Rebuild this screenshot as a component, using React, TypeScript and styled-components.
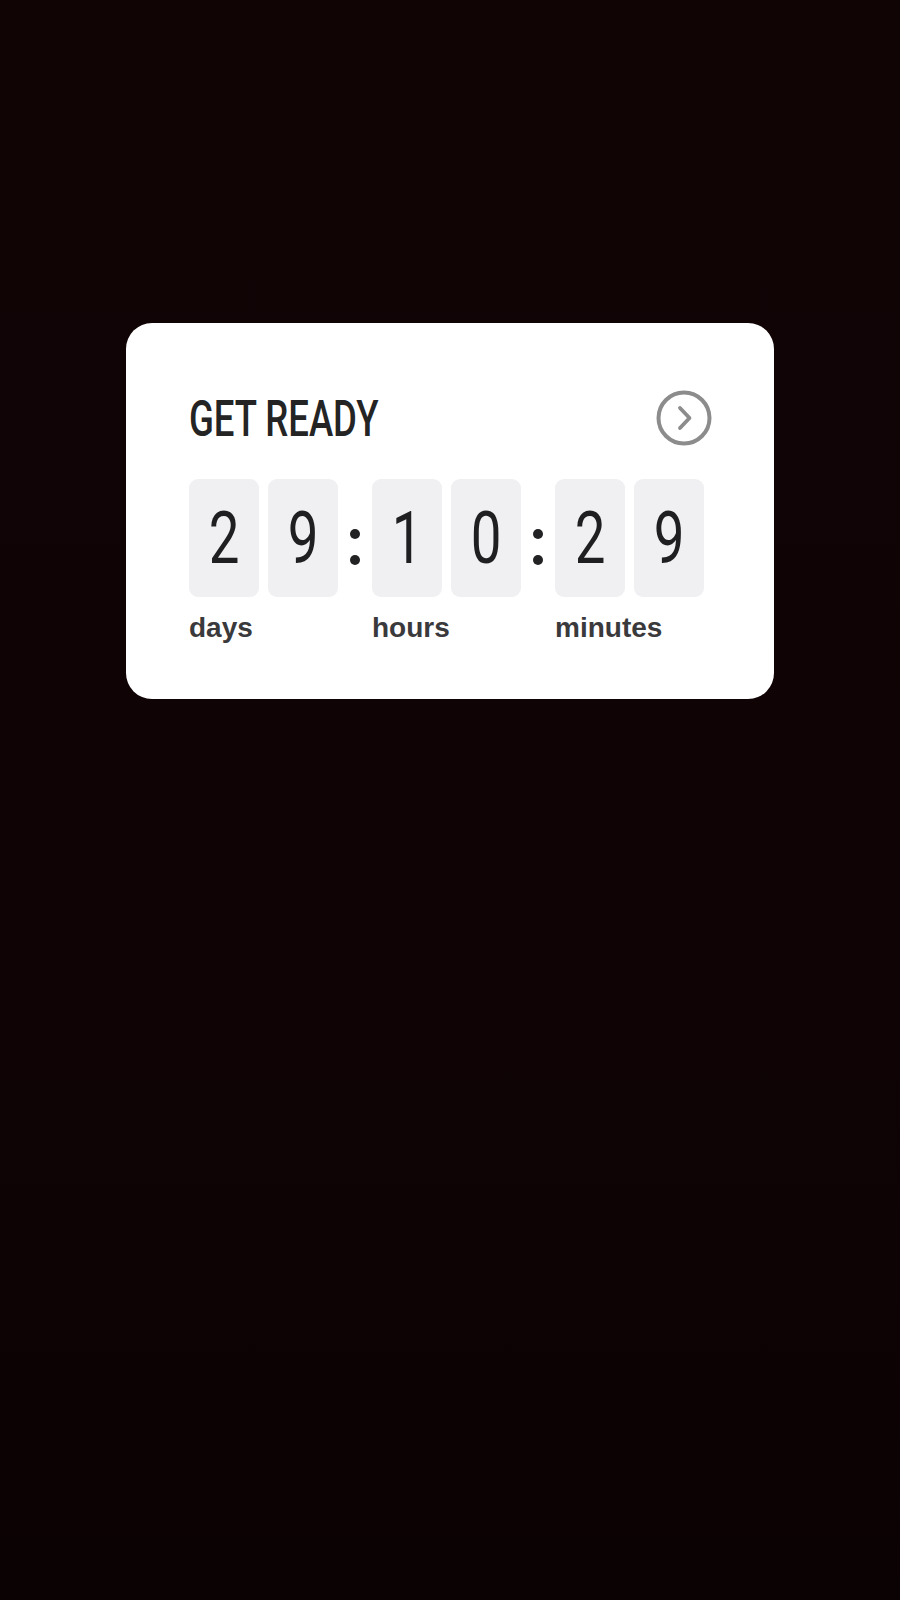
import React from "react";
import styled, { createGlobalStyle } from "styled-components";

const GlobalStyle = createGlobalStyle`
  * {
    box-sizing: border-box;
  }
  body {
    margin: 0;
    background-color: #0f0305;
    font-family: "Liberation Sans", Arial, sans-serif;
  }
`;

const Page = styled.div`
  min-height: 1600px;
  padding-top: 323px;
  display: flex;
  justify-content: center;
  align-items: flex-start;
  background: linear-gradient(180deg, #110405 0%, #0f0305 60%, #0b0203 100%);
`;

const Card = styled.div`
  width: 648px;
  padding: 67px 62px 55px 63px;
  background-color: #ffffff;
  border-radius: 26px;
`;

const Header = styled.div`
  display: flex;
  align-items: center;
  justify-content: space-between;
  height: 55px;
`;

const Title = styled.h1`
  margin: 2px 0 0;
  display: inline-block;
  font-family: Roboto, "Liberation Sans", sans-serif;
  font-size: 50px;
  font-weight: 500;
  line-height: 1;
  color: #242424;
  transform: scaleX(0.73);
  transform-origin: left center;
`;

const NextButton = styled.button`
  width: 56px;
  height: 56px;
  padding: 0;
  border: none;
  background: none;
  cursor: pointer;
  display: flex;
  align-items: center;
  justify-content: center;
`;

const TimerRow = styled.div`
  display: flex;
  align-items: flex-start;
  margin-top: 34px;
`;

const Group = styled.div`
  display: flex;
  flex-direction: column;
`;

const Tiles = styled.div`
  display: flex;
  gap: 9px;
`;

const Tile = styled.div`
  width: 70px;
  height: 118px;
  border-radius: 9px;
  background-color: #f0eff2;
  display: flex;
  align-items: center;
  justify-content: center;
`;

const Digit = styled.span`
  display: inline-block;
  font-family: Roboto, "Liberation Sans", sans-serif;
  font-size: 72px;
  font-weight: 400;
  line-height: 1;
  color: #1f1f21;
  transform: scaleX(0.76);
  margin-top: 2px;
`;

const Colon = styled.div`
  width: 34px;
  display: flex;
  flex-direction: column;
  align-items: center;
  gap: 16px;
  padding-top: 50px;
`;

const Dot = styled.span`
  width: 10px;
  height: 10px;
  border-radius: 50%;
  background-color: #222224;
`;

const Label = styled.div`
  margin-top: 15px;
  font-size: 28px;
  line-height: 32px;
  font-weight: 700;
  color: #3a3a3c;
`;

const units = [
  { value: "29", label: "days" },
  { value: "10", label: "hours" },
  { value: "29", label: "minutes" },
];

function ChevronCircle() {
  return (
    <svg width="56" height="56" viewBox="0 0 56 56" fill="none">
      <circle cx="28" cy="28" r="25.5" stroke="#8c8c8c" strokeWidth="4" />
      <path
        d="M24 18 L33.5 28 L24 38"
        stroke="#8c8c8c"
        strokeWidth="3.8"
        strokeLinecap="round"
        strokeLinejoin="round"
      />
    </svg>
  );
}

export default function App() {
  return (
    <>
      <GlobalStyle />
      <Page>
        <Card>
          <Header>
            <Title>GET READY</Title>
            <NextButton aria-label="Next">
              <ChevronCircle />
            </NextButton>
          </Header>
          <TimerRow>
            {units.map((unit, i) => (
              <React.Fragment key={unit.label}>
                {i > 0 && (
                  <Colon>
                    <Dot />
                    <Dot />
                  </Colon>
                )}
                <Group>
                  <Tiles>
                    {unit.value.split("").map((d, j) => (
                      <Tile key={j}>
                        <Digit>{d}</Digit>
                      </Tile>
                    ))}
                  </Tiles>
                  <Label>{unit.label}</Label>
                </Group>
              </React.Fragment>
            ))}
          </TimerRow>
        </Card>
      </Page>
    </>
  );
}
